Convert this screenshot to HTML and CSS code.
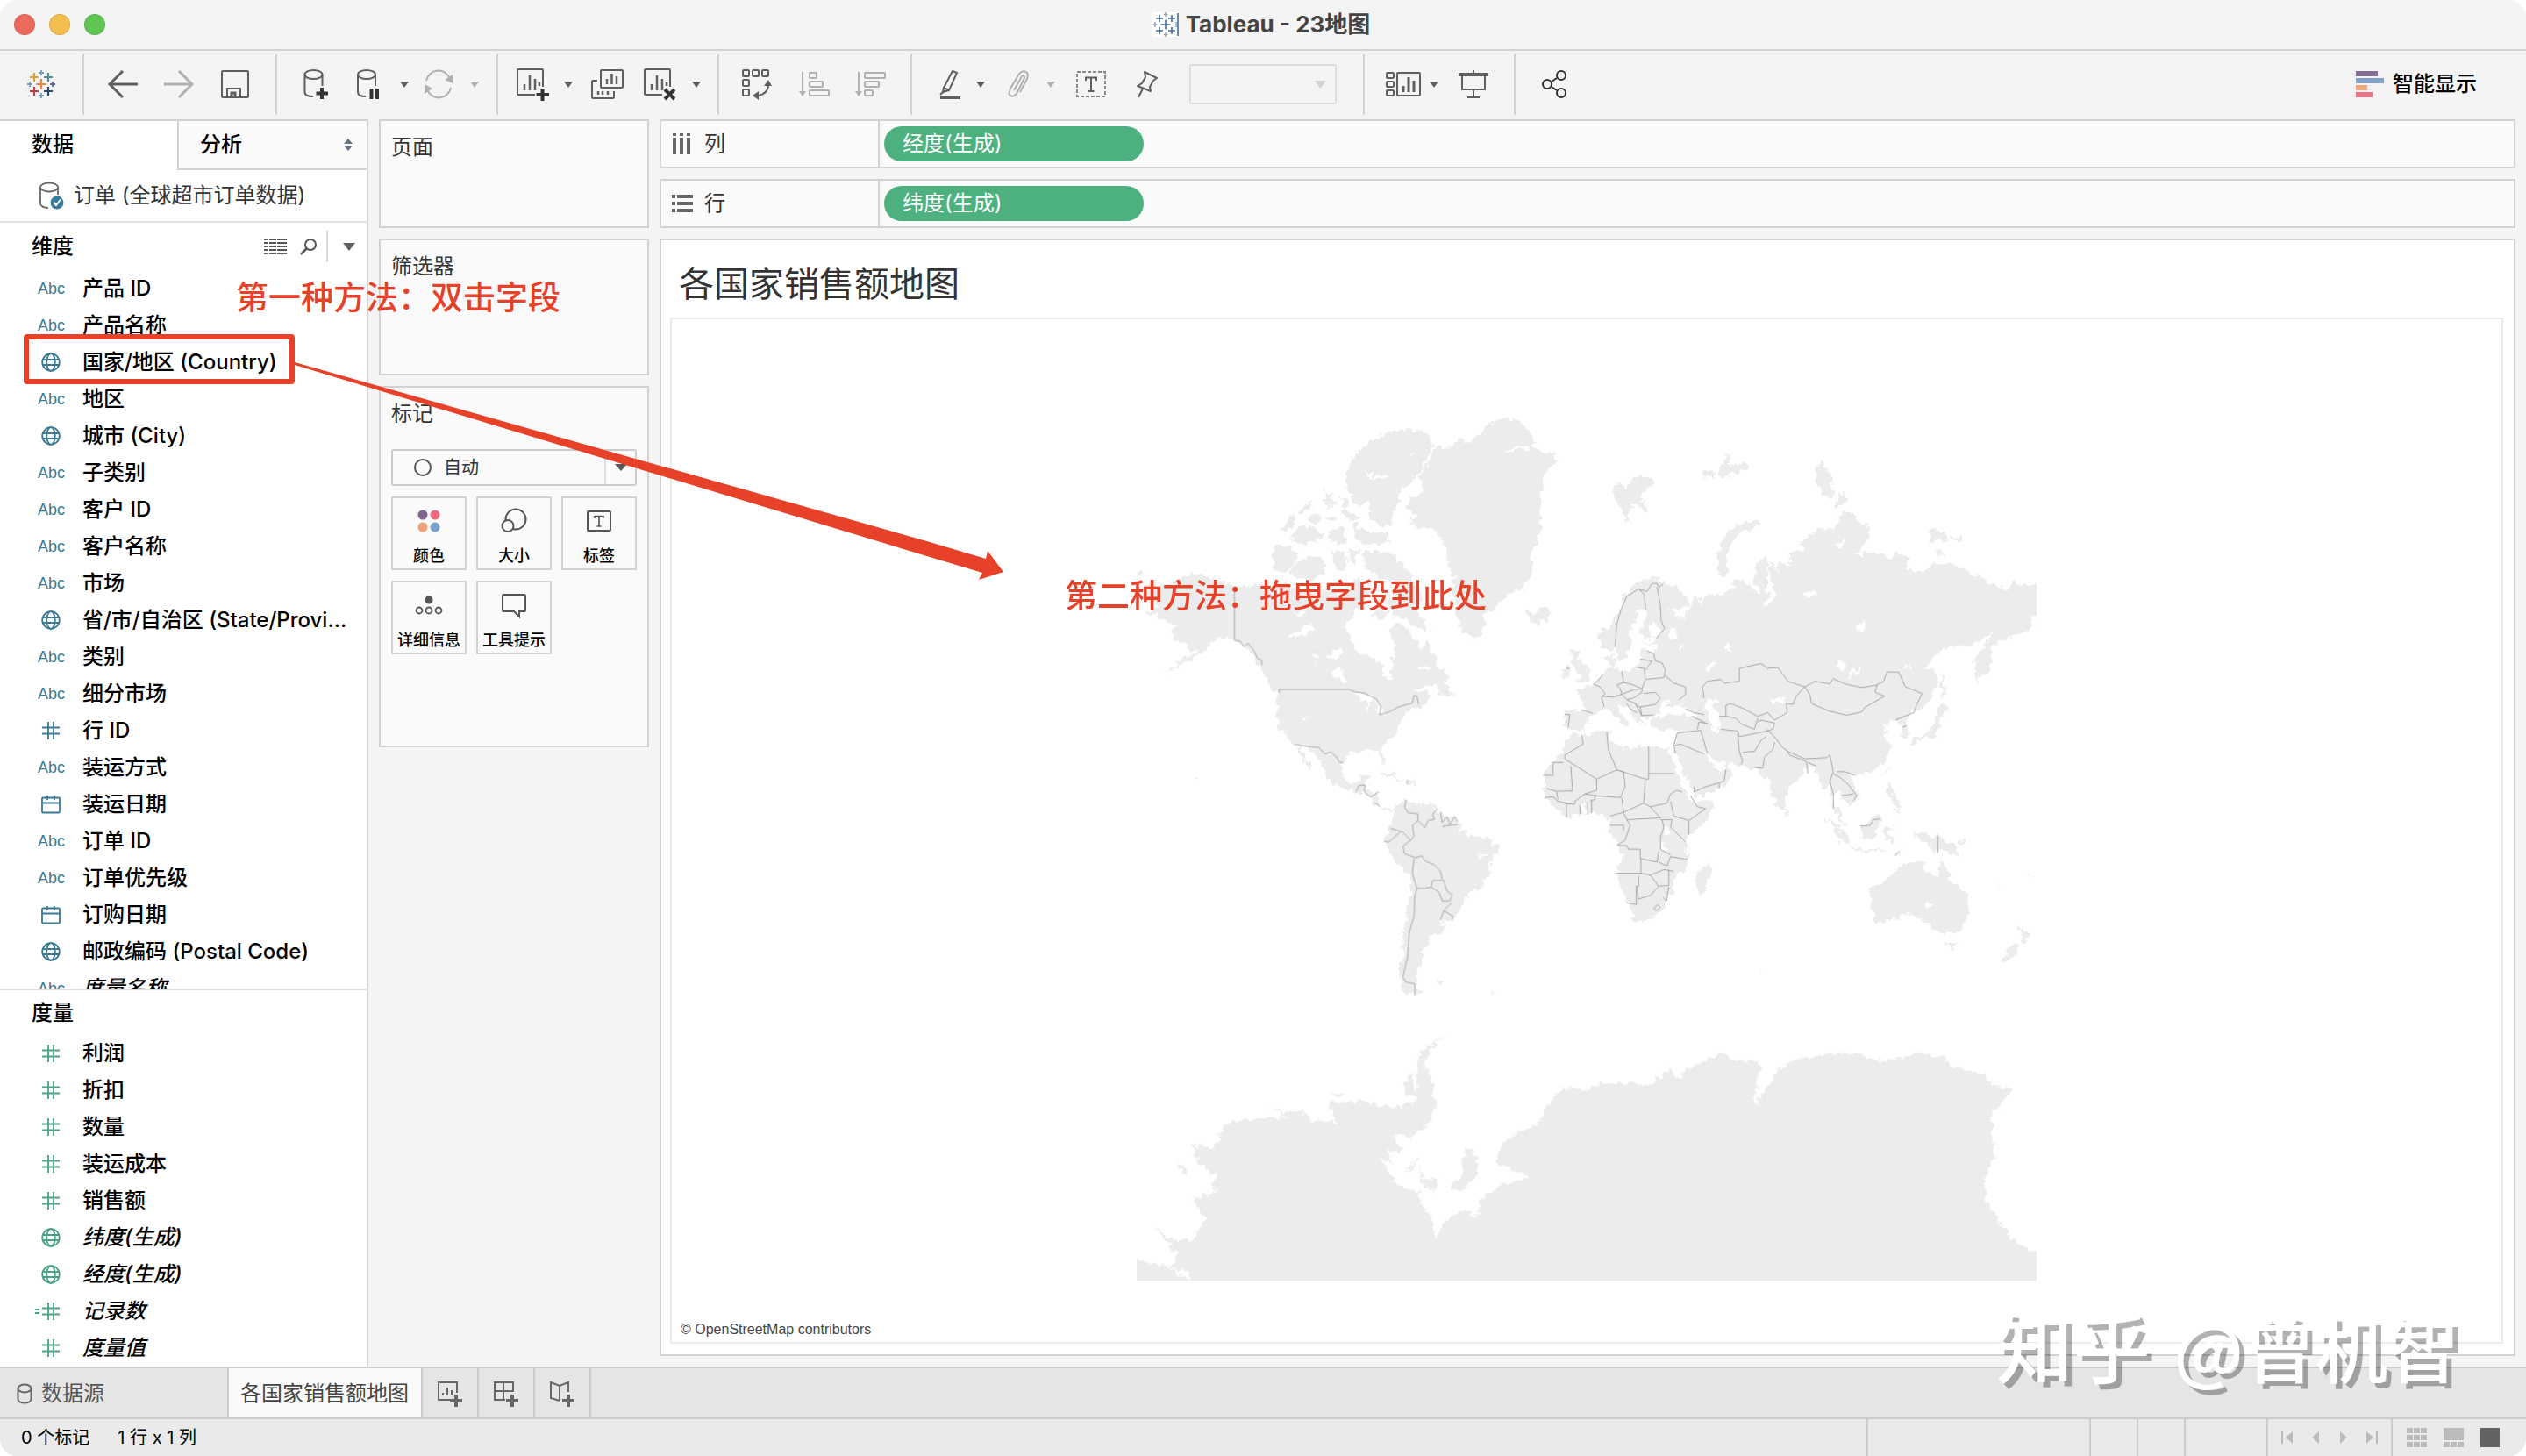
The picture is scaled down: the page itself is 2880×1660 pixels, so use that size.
FILE: index.html
```html
<!DOCTYPE html>
<html lang="zh-CN">
<head>
<meta charset="utf-8">
<title>Tableau - 23地图</title>
<link rel="stylesheet" href="styles.css">
</head>
<body>
<svg width="0" height="0" class="defs" aria-hidden="true">
  <symbol id="caret" viewBox="0 0 10 7"><path d="M0 0H10L5 7Z" fill="currentColor"/></symbol>
  <symbol id="globe" viewBox="0 0 22 22"><g fill="none" stroke="currentColor" stroke-width="1.8"><circle cx="11" cy="11" r="9.8"/><ellipse cx="11" cy="11" rx="4.8" ry="9.8"/><path d="M1.5 8H20.5M1.5 14H20.5"/></g></symbol>
  <symbol id="hash" viewBox="0 0 22 22"><path d="M8 1V21M14 1V21M1 7.5H21M1 14.5H21" stroke="currentColor" stroke-width="1.8"/></symbol>
  <symbol id="calendar" viewBox="0 0 22 22"><g fill="none" stroke="currentColor" stroke-width="1.8"><rect x="1" y="3.5" width="20" height="17" rx="1"/><path d="M1 9.5H21M7 1V6M15 1V6"/></g></symbol>
  <symbol id="bars" viewBox="0 0 38 38"><g fill="none" stroke="currentColor" stroke-width="2"><path d="M22 31H3Q2 31 2 30V3Q2 2 3 2H30Q31 2 31 3V22"/><path d="M10 26V19M16 26V9M22 26V13M27 21V17" stroke-width="2.5"/></g></symbol>
</svg>
<div class="app">
  <header class="titlebar">
    <div class="lights"><button class="light light-close" aria-label="关闭"></button><button class="light light-min" aria-label="最小化"></button><button class="light light-max" aria-label="最大化"></button></div>
    <h1 class="window-title"><svg width="30" height="28" viewBox="0 0 30 28"><path fill="#fff" d="M0 0H30V28H0Z"/><g stroke="#3f6f9c" stroke-width="1.6"><path d="M15 8.500V19.500M9.500 14H20.500M8 3V11M4 7H12M22 3V11M18 7H26M8 17V25M4 21H12M22 17V25M18 21H26M29 1V27"/><path stroke="#9ab" d="M15 0V5M12.500 2.500H17.500M15 23V28M12.500 25.500H17.500M3 11V17M.5 14H5.500M27 11V17"/></g></svg>Tableau - 23地图</h1>
  </header>

  <nav class="toolbar" aria-label="工具栏">
    <div class="group g-home"><button class="tool" aria-label="主页"><svg width="34" height="34" viewBox="-17 -17 34 34" stroke-width="2.2"><path stroke="#e8894a" d="M0-6V6M-6 0H6"/><path stroke="#d9a23c" d="M-8-13V-3M-13-8H-3"/><path stroke="#4e8f98" d="M8-13V-3M3-8H13"/><path stroke="#c43d45" d="M-8 3V13M-13 8H-3"/><path stroke="#2b4a73" d="M8 3V13M3 8H13"/><path stroke="#7a9db3" stroke-width="1.8" d="M0-16V-10M-3-13H3M0 10V16M-3 13H3M-13-3V3M-16 0H-10"/><path stroke="#5b6591" stroke-width="1.8" d="M13-3V3M10 0H16"/></svg></button></div>
    <div class="group g-nav">
      <button class="tool" aria-label="撤消"><svg width="36" height="34" viewBox="0 0 36 34"><path d="M35 17H3M18 2L3 17L18 32" fill="none" stroke="#5f5f5f" stroke-width="3"/></svg></button>
      <button class="tool" aria-label="重做"><svg width="36" height="34" viewBox="0 0 36 34"><path d="M1 17H33M18 2L33 17L18 32" fill="none" stroke="#b0b0b0" stroke-width="3"/></svg></button>
      <button class="tool" aria-label="保存"><svg width="34" height="34" viewBox="0 0 34 34" fill="none" stroke="#5f5f5f" stroke-width="2"><rect x="2" y="2" width="30" height="30" rx="1"/><path d="M8 32V22H23V32"/><path d="M13 31V27H17V31" stroke-width="3"/></svg></button>
    </div>
    <div class="group g-data">
      <button class="tool" aria-label="新建数据源"><svg width="30" height="36" viewBox="0 0 30 36"><g fill="none" stroke="#5f5f5f" stroke-width="2"><ellipse cx="11.500" cy="7" rx="10" ry="5"/><path d="M1.500 7V27C1.500 30 5 32 11 32M21.500 7V20"/></g><path d="M21 22V35M14.500 28.500H28" stroke="#333" stroke-width="4"/></svg></button>
      <button class="tool" aria-label="暂停自动更新"><svg width="30" height="36" viewBox="0 0 30 36"><g fill="none" stroke="#5f5f5f" stroke-width="2"><ellipse cx="13" cy="7" rx="10" ry="5"/><path d="M3 7V27C3 30 6 32 12 32M23 7V20"/></g><path d="M18.500 23V35M25 23V35" stroke="#333" stroke-width="4"/></svg></button>
      <button class="tool dark" aria-label="更新选项"><svg width="10" height="7"><use href="#caret"/></svg></button>
      <button class="tool" aria-label="刷新"><svg width="36" height="34" viewBox="0 0 36 34"><path d="M4 13A14 14 0 0 1 31 11M32 21A14 14 0 0 1 5 23" fill="none" stroke="#b0b0b0" stroke-width="2"/><path d="M25 12L34 6V16ZM11 22L2 17V28Z" fill="#b0b0b0"/></svg></button>
      <button class="tool pale" aria-label="刷新选项"><svg width="10" height="7"><use href="#caret"/></svg></button>
    </div>
    <div class="group g-sheet">
      <button class="tool ink" aria-label="新建工作表"><svg width="38" height="38" viewBox="0 0 38 38"><use href="#bars"/><path d="M30.500 24V38M23.500 31H38" stroke="#333" stroke-width="4"/></svg></button>
      <button class="tool dark" aria-label="新建选项"><svg width="10" height="7"><use href="#caret"/></svg></button>
      <button class="tool" aria-label="复制工作表"><svg width="38" height="36" viewBox="0 0 38 36" fill="none" stroke="#5f5f5f" stroke-width="2"><rect x="12" y="2" width="25" height="20" rx="1"/><path d="M19 18V12M24.500 18V6M30 18V9" stroke-width="2.5"/><path d="M8 14H3Q2 14 2 15V33Q2 34 3 34H26Q27 34 27 33V26"/><path d="M9 30V26M14 30V26M20 30V26" stroke-width="2.500"/></svg></button>
      <button class="tool ink" aria-label="清除工作表"><svg width="38" height="38" viewBox="0 0 38 38"><use href="#bars"/><path d="M25 25L36 36M36 25L25 36" stroke="#333" stroke-width="4"/></svg></button>
      <button class="tool dark" aria-label="清除选项"><svg width="10" height="7"><use href="#caret"/></svg></button>
    </div>
    <div class="group g-sort">
      <button class="tool" aria-label="交换行和列"><svg width="36" height="36" viewBox="0 0 36 36"><g fill="none" stroke="#5f5f5f" stroke-width="2"><rect x="2" y="2" width="7" height="7" rx="1"/><rect x="13" y="2" width="7" height="7" rx="1"/><rect x="24" y="2" width="7" height="7" rx="1"/><rect x="2" y="13" width="7" height="7" rx="1"/><rect x="2" y="24" width="7" height="7" rx="1"/><path d="M31 18Q31 29 19 31"/></g><path d="M26 20L31 13L35 20ZM20 26L13 31L20 36Z" fill="#5f5f5f"/></svg></button>
      <button class="tool" aria-label="升序排序"><svg width="36" height="32" viewBox="0 0 36 32"><g fill="none" stroke="#b0b0b0" stroke-width="2"><path d="M5 2V26"/><rect x="13" y="3" width="8" height="6" rx="1"/><rect x="13" y="13" width="15" height="6" rx="1"/><rect x="13" y="23" width="22" height="6" rx="1"/></g><path d="M1 24H9L5 30Z" fill="#b0b0b0"/></svg></button>
      <button class="tool" aria-label="降序排序"><svg width="36" height="32" viewBox="0 0 36 32"><g fill="none" stroke="#b0b0b0" stroke-width="2"><path d="M5 2V26"/><rect x="12" y="3" width="23" height="6" rx="1"/><rect x="12" y="13" width="16" height="6" rx="1"/><rect x="12" y="23" width="9" height="6" rx="1"/></g><path d="M1 24H9L5 30Z" fill="#b0b0b0"/></svg></button>
    </div>
    <div class="group g-mark">
      <button class="tool" aria-label="突出显示"><svg width="26" height="36" viewBox="0 0 26 36"><g fill="none" stroke="#5f5f5f" stroke-width="2"><path d="M15 3L20 5L11 25L5 22ZM5 22L4 27L11 25"/><path d="M1 30L5 26"/></g><path d="M1 33.500H24" stroke="#5f5f5f" stroke-width="3"/></svg></button>
      <button class="tool dark" aria-label="突出显示选项"><svg width="10" height="7"><use href="#caret"/></svg></button>
      <button class="tool" aria-label="分组"><svg width="26" height="34" viewBox="0 0 26 34"><path d="M8 24L17 8Q20 5 20 10L11 28Q6 33 3 29Q2 27 4 22L14 5Q19 0 23 4Q25 7 22 13L15 26" fill="none" stroke="#b0b0b0" stroke-width="2"/></svg></button>
      <button class="tool pale" aria-label="分组选项"><svg width="10" height="7"><use href="#caret"/></svg></button>
      <button class="tool" aria-label="显示标记标签"><svg width="34" height="30" viewBox="0 0 34 30"><rect x="1" y="1" width="32" height="28" fill="none" stroke="#8a8a8a" stroke-width="2" stroke-dasharray="4 2"/><path d="M11 11V7.500H23V11M17 8V23M13.500 23H20.500" fill="none" stroke="#5f5f5f" stroke-width="2"/></svg></button>
      <button class="tool" aria-label="固定轴"><svg width="28" height="32" viewBox="0 0 28 32"><path d="M12 2L26 9L22 12L18 19L19 24L4 18L9 15L13 8ZM10 21L5 31" fill="none" stroke="#5f5f5f" stroke-width="2" stroke-linejoin="round"/></svg></button>
      <span class="fit"><select class="fit-select" aria-label="适合" disabled><option></option></select><svg class="fit-caret" width="13" height="9" viewBox="0 0 10 7"><use href="#caret"/></svg></span>
    </div>
    <div class="group g-show">
      <button class="tool" aria-label="显示/隐藏卡"><svg width="40" height="30" viewBox="0 0 40 30" fill="none" stroke="#5f5f5f" stroke-width="2"><rect x="1" y="2" width="8" height="6" rx="1"/><rect x="1" y="12" width="8" height="6" rx="1"/><rect x="1" y="22" width="8" height="6" rx="1"/><rect x="13" y="2" width="26" height="26" rx="1"/><path d="M20 24V17M26 24V7M32 24V11" stroke-width="3"/></svg></button>
      <button class="tool dark" aria-label="卡选项"><svg width="10" height="7"><use href="#caret"/></svg></button>
      <button class="tool" aria-label="演示模式"><svg width="34" height="34" viewBox="0 0 34 34" fill="none" stroke="#5f5f5f" stroke-width="2"><path d="M0 6H34" stroke-width="4"/><path d="M17 1V5M4 7V23H30V7M17 23V32M10 32H24"/></svg></button>
    </div>
    <div class="group g-share"><button class="tool" aria-label="共享"><svg width="30" height="34" viewBox="0 0 30 34" fill="none" stroke="#333" stroke-width="2"><circle cx="7" cy="17" r="5"/><circle cx="23" cy="7" r="5"/><circle cx="23" cy="27" r="5"/><path d="M12 14L18 10M12 20L18 24"/></svg></button></div>
    <button class="showme"><svg width="32" height="30" viewBox="0 0 32 30"><path fill="#866d93" d="M0 0H25V6H0Z"/><path fill="#83a1c8" d="M0 8H32V14H0Z"/><path fill="#efa67c" d="M0 16H13V22H0Z"/><path fill="#ea7186" d="M0 24H19V30H0Z"/></svg>智能显示</button>
  </nav>

  <main class="workspace">
    <aside class="side">
      <div class="side-tabs"><button class="side-tab active">数据</button><button class="side-tab">分析<svg width="10" height="14" viewBox="0 0 10 14"><path d="M0 6L5 0L10 6ZM0 8H10L5 14Z" fill="#667080"/></svg></button></div>
      <div class="source"><svg width="28" height="32" viewBox="0 0 28 32"><g fill="none" stroke="#666" stroke-width="1.800"><ellipse cx="11" cy="6.500" rx="10" ry="5"/><path d="M1 6V25C1 28 5 30 10 30M21 6V15"/></g><circle cx="20" cy="24" r="7.500" fill="#3a7c9c"/><path d="M16.500 24L19 27L24 20.500" fill="none" stroke="#fff" stroke-width="2"/></svg>订单 (全球超市订单数据)</div>
      <section class="dims">
        <div class="side-head"><h2>维度</h2>
          <button class="tool" aria-label="查看数据"><svg width="26" height="18" viewBox="0 0 26 18"><path d="M0 1H26M0 5H26M0 9H26M0 13H26M0 17H26" stroke="#555" stroke-width="1.800" stroke-dasharray="4 2 8 1 5 1 5 1"/></svg></button>
          <button class="tool find" aria-label="查找字段"><svg width="20" height="20" viewBox="0 0 20 20"><circle cx="12" cy="8" r="6" fill="none" stroke="#555" stroke-width="2"/><path d="M8 12L1 19" stroke="#555" stroke-width="2.500"/></svg></button>
          <button class="tool dark menu" aria-label="字段菜单"><svg width="14" height="9" viewBox="0 0 10 7" preserveAspectRatio="none"><use href="#caret"/></svg></button>
        </div>
        <ul class="fields">
          <li><span class="abc">Abc</span>产品 ID</li>
          <li><span class="abc">Abc</span>产品名称</li>
          <li><svg><use href="#globe"/></svg>国家/地区 (Country)</li>
          <li><span class="abc">Abc</span>地区</li>
          <li><svg><use href="#globe"/></svg>城市 (City)</li>
          <li><span class="abc">Abc</span>子类别</li>
          <li><span class="abc">Abc</span>客户 ID</li>
          <li><span class="abc">Abc</span>客户名称</li>
          <li><span class="abc">Abc</span>市场</li>
          <li><svg><use href="#globe"/></svg>省/市/自治区 (State/Provi...</li>
          <li><span class="abc">Abc</span>类别</li>
          <li><span class="abc">Abc</span>细分市场</li>
          <li><svg><use href="#hash"/></svg>行 ID</li>
          <li><span class="abc">Abc</span>装运方式</li>
          <li><svg><use href="#calendar"/></svg>装运日期</li>
          <li><span class="abc">Abc</span>订单 ID</li>
          <li><span class="abc">Abc</span>订单优先级</li>
          <li><svg><use href="#calendar"/></svg>订购日期</li>
          <li><svg><use href="#globe"/></svg>邮政编码 (Postal Code)</li>
          <li class="gen"><span class="abc">Abc</span>度量名称</li>
        </ul>
      </section>
      <section class="measures">
        <div class="side-head"><h2>度量</h2></div>
        <ul class="fields green">
          <li><svg><use href="#hash"/></svg>利润</li>
          <li><svg><use href="#hash"/></svg>折扣</li>
          <li><svg><use href="#hash"/></svg>数量</li>
          <li><svg><use href="#hash"/></svg>装运成本</li>
          <li><svg><use href="#hash"/></svg>销售额</li>
          <li class="gen"><svg><use href="#globe"/></svg>纬度(生成)</li>
          <li class="gen"><svg><use href="#globe"/></svg>经度(生成)</li>
          <li class="gen"><svg viewBox="0 0 22 22"><use href="#hash" width="22" height="22"/><path d="M-7 9H-2M-7 13H-2" stroke="currentColor" stroke-width="1.800"/></svg>记录数</li>
          <li class="gen"><svg><use href="#hash"/></svg>度量值</li>
        </ul>
      </section>
    </aside>

    <div class="cards">
      <section class="card pages"><h2>页面</h2></section>
      <section class="card filters"><h2>筛选器</h2></section>
      <section class="card marks"><h2>标记</h2>
        <div class="mark-type"><svg class="mark-dot" width="22" height="22" viewBox="0 0 22 22"><circle cx="11" cy="11" r="9" fill="none" stroke="#555" stroke-width="2"/></svg><select class="mark-select" aria-label="标记类型"><option>自动</option></select><span class="mark-arrow"><svg width="14" height="8" viewBox="0 0 10 7" preserveAspectRatio="none"><use href="#caret"/></svg></span></div>
        <div class="mark-grid">
          <button class="mark"><svg viewBox="0 0 32 32"><circle cx="9" cy="9" r="5.500" fill="#7f6592"/><circle cx="23" cy="9" r="5.500" fill="#ea6b80"/><circle cx="9" cy="23" r="5.500" fill="#efa276"/><circle cx="23" cy="23" r="5.500" fill="#7ba0c9"/></svg>颜色</button>
          <button class="mark"><svg viewBox="0 0 32 32" fill="none" stroke="#555" stroke-width="2"><circle cx="18" cy="14" r="11.500"/><circle cx="9" cy="21.500" r="6.500" fill="#fafafa"/></svg>大小</button>
          <button class="mark"><svg viewBox="0 0 32 32" fill="none" stroke="#555" stroke-width="2"><rect x="3" y="5" width="26" height="22" rx="1"/><path d="M11 13V10.500H21V13M16 11V22M13.500 22H18.500" stroke-width="1.600"/></svg>标签</button>
          <button class="mark"><svg viewBox="0 0 32 32" fill="none" stroke="#555" stroke-width="1.800"><circle cx="16" cy="10" r="4.500" fill="#555" stroke="none"/><circle cx="5" cy="22" r="3.500"/><circle cx="16" cy="22" r="3.500"/><circle cx="27" cy="22" r="3.500"/></svg>详细信息</button>
          <button class="mark"><svg viewBox="0 0 32 32" fill="none" stroke="#555" stroke-width="2"><path d="M4 4H28Q29 4 29 5V22Q29 23 28 23H22V29L16 23H4Q3 23 3 22V5Q3 4 4 4Z"/></svg>工具提示</button>
        </div>
      </section>
    </div>

    <div class="canvas">
      <div class="shelf"><div class="shelf-name"><svg width="24" height="26" viewBox="0 0 24 26"><path d="M3 1V4M11 1V4M19 1V4M3 6V25M11 6V25M19 6V25" stroke="#666" stroke-width="4"/></svg>列</div><button class="pill">经度(生成)</button></div>
      <div class="shelf"><div class="shelf-name"><svg width="24" height="22" viewBox="0 0 24 22"><path d="M0 3H4M6 3H24M0 11H4M6 11H24M0 19H4M6 19H24" stroke="#666" stroke-width="4"/></svg>行</div><button class="pill">纬度(生成)</button></div>
      <section class="view">
        <h2 class="view-title">各国家销售额地图</h2>
        <div class="map">
          <svg class="world" viewBox="1284 412 1050 1070" role="img" aria-label="世界地图">
            <defs>
              <clipPath id="extent"><path d="M1296 412H2322V1460H1296Z"/></clipPath>
              <filter id="coast" filterUnits="userSpaceOnUse" x="1284" y="412" width="1050" height="1090" color-interpolation-filters="sRGB"><feTurbulence type="fractalNoise" baseFrequency="0.13" numOctaves="3" seed="7"/><feDisplacementMap in="SourceGraphic" scale="12" xChannelSelector="R" yChannelSelector="G"/></filter>
            </defs>
            <g clip-path="url(#extent)">
            <g filter="url(#coast)" fill="#ececec">
              <g transform="translate(1280 460) scale(.35714 .44643)">
                <path d="M235 432L270 445 320 455 357 465 400 468 440 455 480 470 520 455 560 475 610 482 660 475 700 492 722 470 750 440 765 470 790 480 760 510 740 530 720 555 700 572 725 585 735 620 760 640 800 655 830 665 830 690 845 704 858 700 855 650 868 640 860 600 850 578 870 558 900 565 920 590 940 602 955 630 972 605 990 640 1010 670 1035 690 1035 702 1010 715 970 722 925 737 960 738 985 748 975 762 940 778 910 788 890 805 875 840 860 850 825 878 832 900 842 922 830 918 818 890 795 885 760 892 730 890 705 915 700 950 720 970 745 968 755 950 790 950 780 970 772 988 818 992 812 1018 830 1032 862 1035 860 1045 835 1040 800 1020 780 1000 740 992 690 975 650 955 640 930 620 900 590 878 562 872 580 900 608 935 600 938 575 910 550 872 525 855 500 830 490 800 493 760 495 738 470 718 455 700 440 672 420 650 395 622 375 612 357 605 310 598 280 615 260 632 220 652 180 672 135 690 190 655 240 632 200 618 165 605 160 580 175 565 130 555 110 540 60 535 115 520 90 505 50 490 75 480 55 468 90 462 150 462Z"/>
                <path d="M485 362L520 362 560 380 555 400 520 430 478 422ZM560 400L620 390 645 400 650 430 610 450 570 445 530 430ZM670 380L710 375 715 420 690 430 672 405ZM725 375L760 372 740 410 720 400ZM768 385L790 375 870 385 875 400 920 430 940 470 960 500 930 520 960 550 975 580 930 570 900 550 860 545 850 500 880 500 870 455 820 445 800 430 770 420ZM810 520L850 530 835 550 800 545ZM1000 700L1030 712 1058 752 1040 745 1010 745ZM500 325L540 285 555 300 530 325ZM530 340L570 310 620 320 640 345 600 355 560 360ZM565 275L605 248 605 265 570 285ZM640 225L670 235 680 260 650 265ZM700 270L760 290 740 300 700 290ZM735 305L790 330 848 328 845 355 780 362 745 350ZM600 280L630 290 625 310 590 300ZM660 325L710 315 715 340 690 365 660 345ZM695 240L722 250 718 268 700 262ZM650 290L690 290 680 305 655 305Z"/>
                <path d="M740 130L790 100 850 70 920 65 970 75 995 105 975 135 950 165 930 200 880 220 885 250 860 280 858 310 830 318 785 300 790 250 755 260 720 225 710 180 730 150Z"/>
                <path d="M1165 55L1220 36 1270 45 1310 80 1305 105 1345 125 1388 130 1380 155 1350 180 1330 240 1335 310 1320 360 1300 390 1310 420 1300 450 1270 475 1225 490 1180 530 1155 530 1155 565 1135 605 1090 590 1065 540 1060 500 1050 470 1060 440 1040 420 1035 370 1000 325 950 320 905 300 945 290 900 260 915 245 960 220 945 185 970 155 1000 115 1055 108 1080 90 1110 100Z"/>
                <path d="M1285 525L1310 535 1350 515 1370 535 1355 552 1320 562 1298 553ZM810 942L850 945 900 962 870 960 820 946ZM898 962L930 964 935 970 905 972ZM45 430L62 428 66 436 48 438ZM235 955L245 962 240 966ZM998 1472L1018 1474 1005 1480ZM1175 1502L1195 1506 1180 1508Z"/>
                <path d="M870 1025L905 1012 925 1022 985 1020 1000 1040 1040 1055 1070 1065 1085 1080 1075 1090 1120 1105 1165 1110 1200 1130 1200 1140 1172 1175 1170 1210 1140 1240 1100 1255 1090 1275 1055 1320 1015 1318 1028 1340 1015 1355 975 1358 980 1372 950 1400 958 1410 945 1440 940 1465 935 1480 958 1508 920 1512 888 1495 880 1450 900 1400 890 1370 905 1310 918 1250 920 1205 875 1180 835 1120 838 1100 862 1065 862 1040Z"/>
              </g>
              <g transform="translate(1740 480) scale(.38265 .42092)">
                <path d="M115 785L165 782 200 795 165 770 175 760 160 745 145 735 150 725 175 722 190 715 205 705 220 690 240 675 250 665 240 640 262 628 265 650 262 665 285 675 310 672 335 668 340 650 340 635 355 620 385 625 385 605 345 602 410 592 385 590 350 592 335 570 350 545 365 520 355 512 335 515 325 545 310 565 315 590 305 620 290 650 275 655 265 615 250 625 225 615 215 575 245 555 275 520 285 480 310 450 350 430 385 425 410 440 450 450 480 480 485 500 450 510 420 500 440 515 450 535 480 535 470 515 495 500 500 475 520 480 520 500 540 470 560 475 600 460 630 455 615 430 650 435 685 465 700 465 675 430 690 380 715 370 722 400 718 460 730 470 705 500 728 495 750 465 735 455 730 430 725 380 740 380 745 410 760 380 790 395 778 360 825 350 820 325 850 305 900 290 925 285 935 250 965 245 990 275 1022 285 1020 320 980 365 1030 355 1090 370 1100 355 1140 370 1140 400 1160 410 1200 400 1215 380 1260 385 1300 400 1330 415 1370 425 1370 440 1440 455 1450 435 1545 450 1545 525 1505 530 1515 560 1480 568 1460 580 1400 602 1385 615 1392 640 1380 670 1355 695 1345 710 1335 680 1340 640 1370 605 1395 575 1380 580 1355 590 1330 610 1280 605 1235 620 1200 660 1185 670 1220 675 1225 710 1200 760 1180 780 1145 790 1130 810 1140 855 1120 860 1120 825 1105 810 1080 820 1060 820 1075 840 1065 850 1085 885 1070 920 1040 945 1000 955 980 960 965 970 990 1010 985 1030 965 1040 945 1030 930 1005 915 1010 910 1030 940 1065 950 1100 930 1080 915 1050 905 985 885 1000 870 960 860 935 840 935 825 960 780 1000 770 1050 755 1055 735 1020 720 965 700 960 685 945 640 930 610 930 602 940 622 950 590 990 500 1020 498 995 470 950 445 905 440 880 450 840 430 840 390 838 370 820 375 805 400 800 440 795 490 800 520 800 500 790 460 770 440 775 420 770 430 755 410 760 400 785 385 800 340 805 350 830 335 815 320 800 300 775 270 760 285 795 310 815 290 830 280 815 245 780 225 785 200 795 180 820 170 835 135 840 115 830Z"/>
                <path d="M135 850L165 850 240 842 255 845 250 865 300 885 325 890 330 870 360 880 430 888 435 920 458 970 470 1000 495 1028 555 1027 555 1050 530 1090 485 1120 475 1150 480 1190 480 1210 440 1240 440 1280 420 1290 400 1335 370 1350 325 1358 310 1330 290 1270 270 1225 285 1180 275 1150 245 1110 250 1075 240 1075 200 1062 165 1065 120 1075 90 1050 55 1020 55 960 80 920 110 895 110 870ZM510 1220L530 1210 545 1192 553 1215 530 1280 512 1285 502 1262Z"/>
                <path d="M135 620L160 620 158 640 175 660 190 685 185 705 150 712 145 700 160 690 150 670 135 650ZM108 675L132 668 130 690 110 700 105 690ZM260 175L285 170 300 185 310 160 345 148 380 160 375 180 345 192 358 250 335 235 318 220 303 278 285 240 262 210ZM520 135L555 130 560 155 530 155ZM570 145L590 100 610 95 605 120 660 115 662 130 610 140 600 155ZM690 268L690 285 640 300 615 330 595 380 600 420 570 410 565 385 580 340 605 295 650 275ZM875 115L890 112 908 150 920 200 895 205 870 180 862 150ZM920 235L930 190 962 215ZM1200 300L1215 290 1258 305 1250 325 1205 325ZM1265 312L1298 320 1290 328 1268 322ZM1220 345L1245 358 1225 365Z"/>
                <path d="M1235 680L1242 690 1250 745 1238 755ZM1235 765L1260 780 1235 800 1235 830 1215 855 1185 858 1150 880 1150 862 1195 850 1215 810 1225 795ZM1078 935L1082 945 1075 958ZM1072 985L1085 980 1090 1010 1110 1020 1115 1065 1092 1055 1105 1045 1085 1020 1070 1005ZM770 1040L788 1060 778 1070ZM890 1070L920 1090 960 1125 965 1150 945 1145 915 1105ZM965 1155L1010 1160 1080 1162 1020 1168 970 1162ZM995 1095L1030 1080 1048 1060 1055 1080 1040 1130 1005 1130ZM1065 1105L1100 1102 1080 1112 1090 1140 1070 1135ZM1095 1168L1120 1160 1100 1175ZM1150 1112L1175 1120 1230 1125 1270 1150 1298 1178 1260 1170 1235 1160 1215 1165 1195 1140 1165 1130ZM1285 1145L1310 1132 1305 1145Z"/>
                <path d="M1025 1265L1080 1245 1110 1210 1155 1190 1190 1195 1185 1220 1225 1235 1238 1185 1255 1215 1265 1245 1315 1290 1322 1320 1290 1385 1240 1390 1205 1370 1195 1350 1180 1355 1140 1335 1085 1350 1045 1360 1035 1350ZM1255 1410L1282 1412 1270 1436ZM1465 1360L1480 1380 1504 1388 1480 1417 1474 1390ZM1472 1410L1460 1440 1432 1468 1416 1462 1436 1436ZM1400 1248L1418 1262 1410 1258ZM1498 1230L1512 1222 1502 1232ZM690 1490L702 1492 692 1496Z"/>
              </g>
              <g transform="translate(1280 1140) scale(.67602 .33333)">
                <path d="M122 990L110 935 75 905 90 900 88 860 50 770 75 810 100 820 120 820 138 750 120 680 158 655 150 630 158 605 125 545 115 490 150 510 165 480 165 440 190 415 220 405 300 400 320 415 360 418 345 350 400 345 440 365 470 365 495 345 497 250 500 180 545 122 515 180 508 235 522 260 528 360 520 420 485 470 455 465 475 520 445 515 455 560 430 540 460 620 480 650 500 660 510 720 520 740 528 815 545 750 580 715 595 750 605 680 640 630 685 605 650 570 630 555 635 510 665 450 700 430 705 390 735 320 740 300 760 300 780 305 820 280 895 290 920 235 940 270 950 235 990 205 1010 175 1030 205 1075 215 1070 300 1062 350 1070 355 1085 300 1110 230 1150 195 1215 180 1250 190 1265 205 1320 200 1340 180 1385 195 1400 230 1450 250 1465 285 1500 310 1465 400 1470 540 1455 600 1455 680 1475 750 1500 820 1550 880 1550 1000ZM10 870L30 892 80 915 118 965 118 1000 10 1000ZM595 520L600 600 580 640 550 655 570 600 572 540 582 512ZM500 535L485 590 482 570ZM500 570L510 620 530 600 528 655 505 635ZM488 245L494 330 475 330 480 270ZM92 550L110 580 108 600 95 580ZM248 360L270 385 300 378 318 410 270 395ZM352 320L378 322 365 335Z"/>
              </g>
              <g fill="#fff">
                <path transform="translate(1280 460) scale(.35714 .44643)" d="M535 588L560 580 580 570 610 562 600 575 580 590 545 598ZM590 625L640 610 620 618 600 620ZM652 645L690 625 700 635 685 655ZM608 640L620 645 618 662ZM672 685L700 675 705 700 718 715 700 712 690 710ZM740 740L775 738 800 755 785 765 780 795 775 765 750 750ZM805 755L825 775 840 795 815 785ZM575 795L590 800 585 808ZM948 670L985 675 970 685 945 680ZM765 165L790 182 855 180 850 188 800 195 775 185ZM895 135L930 120 925 128ZM1220 125L1260 110 1310 115 1250 122ZM1130 1160L1160 1142 1150 1156ZM545 530L590 535 560 545Z"/>
                <path transform="translate(1740 480) scale(.38265 .42092)" d="M538 760L568 750 568 765 555 775 575 800 578 832 560 840 548 820 545 800 530 780ZM725 755L770 745 765 760 730 768ZM530 885L545 905 575 925 598 925 594 942 570 944 548 922ZM950 700L975 680 998 650 995 670 965 698ZM930 645L945 650 945 678 935 672ZM985 550L1015 545 1010 568 990 572ZM828 465L868 462 865 470 830 478ZM365 560L385 545 400 580 370 590ZM435 560L450 570 445 588 432 580ZM455 610L468 612 464 625ZM538 655L565 652 550 665 548 682 538 680ZM595 600L602 605 603 628 596 620ZM410 1105L432 1102 435 1118 412 1120ZM398 1130L402 1160 425 1170 412 1150ZM1195 1300L1206 1308 1198 1315ZM918 330L965 325 940 345 925 342ZM1125 665L1145 662 1130 675ZM160 1045L175 1035 178 1062 165 1062Z"/>
              </g>
            </g>
            <g class="borders">
              <path transform="translate(1280 460) scale(.35714 .44643)" d="M357 470V605L375 607 388 622 400 612 420 632 430 650 444 655V670M499 740V730H722L740 736 775 740 810 755 825 775 820 795 850 788 880 775 925 765 930 745 940 748 945 768M548 870L590 876 625 878 645 895 665 890 685 905 690 915 705 918M745 992L755 975H775L770 990 790 1005 818 992M805 1020L822 1030M908 962V972M905 1012L900 1030 910 1045 943 1048V1065L965 1083 975 1065 995 1062 990 1050 1003 1035M1015 1045L1020 1070 1035 1055 1045 1075 1060 1055 1070 1068M1020 1080L1070 1075M943 1065L925 1078 930 1105 920 1115 895 1095 855 1085M920 1115L895 1130 900 1150 935 1160 955 1155 965 1168 995 1178 1015 1195 1020 1215M835 1118L850 1120 885 1095M930 1162L925 1200 930 1215 940 1238 965 1238 985 1235 1010 1248 1020 1270 1045 1270 1053 1255 1035 1245 1025 1218 990 1218 985 1235M940 1238L932 1260 930 1310 915 1350 910 1410 895 1465 905 1478 933 1482V1512M1050 1275L1025 1295 1015 1318M1025 1295L1055 1310 1053 1320"/>
              <path transform="translate(1740 480) scale(.38265 .42092)" d="M265 612L270 550 283 510 300 475 335 455 360 462 375 440 390 440 395 450 408 442M335 455L352 470 356 512M390 450L400 500 402 540 412 562 388 588M115 795H130L125 830M165 782L200 792M202 712L215 702 230 685M200 712L220 720 235 738M235 738L225 750 232 775M225 745L260 748 285 740 280 725 270 715 290 708 285 677M290 708L320 715 345 725 355 700 352 670 330 668M345 725L320 728 285 740 300 755 320 750 345 735 345 725M300 755L325 765 345 800M325 765L335 775 385 768 400 750 385 735 350 738M340 775L345 798 380 796M300 765L310 780 330 790M355 700L410 695 415 675 405 655 385 650 380 630 360 622M340 645L375 650 355 675M415 690L440 710 475 720 475 740 455 755M475 780L500 790 530 795M495 800L540 820 515 815 510 835M530 750L525 720 540 705 580 700 590 710 635 705 635 670 700 657 720 670 750 668 780 705 830 720 805 745 795 768 775 765 778 790 740 810 720 790 690 800 650 780 610 765 595 770V800M595 800L625 805 640 820 680 835 690 805M600 800H575M580 835L630 840 635 855 715 840 735 835 740 818 700 810 690 815M630 845L635 895 645 920 640 930M645 897L680 895 700 865 715 855M715 835L735 850 765 885M740 870L735 890 710 910 705 940H685M765 885L780 895 830 915 895 912 905 905M775 890L785 905 835 922 840 955M840 925L865 935M830 720L860 705 905 712 915 698 950 712 1000 722 1045 715 1040 735 1068 745 1010 775 1000 788 955 797 900 785 850 765 845 740 830 720M1045 715L1065 705 1075 680 1110 680 1130 720 1180 738 1165 765 1155 790 1100 810M1120 830L1135 825M905 905L915 950 905 975 915 1010 915 1050M915 955L935 965 960 985 985 1015 975 1030M925 950L950 950 980 960M940 1015L975 1010M450 845L520 838 540 900M450 845L440 880 460 875 530 902M445 900L440 880M500 990V1005L530 992 575 980 590 975 595 945M575 980V995M165 850L170 875 115 905V915L210 970 270 945 245 890 240 842M50 960H80V925H110M133 935L138 1002 90 1003M60 995L90 1003 95 1025M55 1020L80 1018 95 1030 120 1035 120 1075M120 1037L145 1038 145 1030 175 1010 210 1015M210 970V1000L175 1010M190 1030L205 1025 205 1015 280 1020 295 990 290 950 270 945 355 970M365 880V970H355L350 1035 290 1060 285 1020M365 955H440M183 1030V1065M195 1025V1062M160 1040V1065M350 1035L370 1045 420 1035 430 1010 450 1000 465 1005M370 1045L400 1075 300 1080 290 1060 250 1070M430 1030L440 1070 485 1082 535 1050 510 1045 490 1015M485 1082V1120M400 1080H435L430 1100 475 1140M405 1080L410 1100 400 1130 400 1160 430 1175M300 1080L310 1095 295 1135 270 1150M250 1095H290V1110M275 1150H300L305 1160H340V1185L390 1195 395 1165M342 1185V1225H268M342 1225L370 1230 410 1215 440 1220M395 1195L420 1205 430 1180 480 1187M370 1230L395 1260 425 1258 425 1215M395 1260L370 1285 335 1295 328 1260H335V1232M328 1260V1310L300 1305M425 1262L418 1300 408 1290M380 1320L392 1310 400 1318 388 1326ZM995 1098L1025 1095 1035 1080 1055 1078M1227 1125V1170M118 668L130 672M1100 1175L1112 1165"/>
            </g>
            </g>
          </svg>
          <a class="credit" href="#osm">© OpenStreetMap contributors</a>
        </div>
      </section>
    </div>
  </main>

  <nav class="sheets" aria-label="工作表">
    <button class="sheet source-tab"><svg width="18" height="24" viewBox="0 0 18 24" fill="none" stroke="#666" stroke-width="2"><ellipse cx="9" cy="6" rx="7.500" ry="4.500"/><path d="M1.500 6V18C1.500 24 16.500 24 16.500 18V6"/></svg>数据源</button>
    <button class="sheet current">各国家销售额地图</button>
    <button class="sheet add" aria-label="新建工作表"><svg viewBox="0 0 30 30"><path d="M17 22H2V2H23V14" fill="none" stroke="#666" stroke-width="2"/><path d="M7 17V14M12 17V8M17 17V11" stroke="#666" stroke-width="2"/><path d="M22 16V30M15 23H29" stroke="#666" stroke-width="4"/></svg></button>
    <button class="sheet add" aria-label="新建仪表板"><svg viewBox="0 0 30 30"><path d="M14 22H2V2H23V12H2M12 2V22" fill="none" stroke="#666" stroke-width="2"/><path d="M22 16V30M15 23H29" stroke="#666" stroke-width="4"/></svg></button>
    <button class="sheet add" aria-label="新建故事"><svg viewBox="0 0 30 30"><path d="M12 23L2 20V2L12 6L22 2V13M12 6V23" fill="none" stroke="#666" stroke-width="2"/><path d="M22 16V30M15 23H29" stroke="#666" stroke-width="4"/></svg></button>
  </nav>
  <footer class="status">
    <span>0 个标记</span><span class="size">1 行 x 1 列</span>
    <span class="cell c1"></span><span class="cell c2"></span><span class="cell c2"></span><span class="cell c3"></span>
    <span class="cell pager">
      <button class="tool" aria-label="第一个"><svg width="14" height="14" viewBox="0 0 14 14"><path d="M0 0H2V14H0ZM13 0V14L5 7Z" fill="#bbb"/></svg></button>
      <button class="tool" aria-label="上一个"><svg width="14" height="14" viewBox="0 0 14 14"><path d="M11 0V14L3 7Z" fill="#bbb"/></svg></button>
      <button class="tool" aria-label="下一个"><svg width="14" height="14" viewBox="0 0 14 14"><path d="M3 0V14L11 7Z" fill="#bbb"/></svg></button>
      <button class="tool" aria-label="最后一个"><svg width="14" height="14" viewBox="0 0 14 14"><path d="M14 0H12V14H14ZM1 0V14L9 7Z" fill="#bbb"/></svg></button>
    </span>
    <span class="cell modes">
      <button class="tool" aria-label="工作表排序程序"><svg width="23" height="22" viewBox="0 0 23 22"><path d="M0 3H23M0 11H23M0 19H23" stroke="#bbb" stroke-width="6" stroke-dasharray="7 1"/></svg></button>
      <button class="tool" aria-label="缩略图"><svg width="23" height="22" viewBox="0 0 23 22"><path d="M0 0H23V14H0Z" fill="#bbb"/><path d="M0 19H23" stroke="#bbb" stroke-width="6" stroke-dasharray="7 1"/></svg></button>
      <button class="tool" aria-label="标签页"><svg width="22" height="22"><path d="M0 0H22V22H0Z" fill="#636363"/></svg></button>
    </span>
  </footer>

  <svg class="arrow" width="1160" height="680" viewBox="0 0 1160 680" aria-hidden="true"><rect x="30" y="384" width="303" height="51" rx="1" fill="none" stroke="#e8412a" stroke-width="6"/><path d="M336 413L1060 618 1124 637 1126 628 1144 652 1116 661 1120 653 1060 635 336 416Z" fill="#e8412a"/></svg>
  <p class="note note-one">第一种方法：双击字段</p>
  <p class="note note-two">第二种方法：拖曳字段到此处</p>
  <p class="mark-by"><span>知乎</span> @曾机智</p>
</div>
</body>
</html>
```

FILE: styles.css
```css
* { box-sizing: border-box; }
body { margin: 0; background: #fff; color: #000; font: 24px/32px Inter, "Noto Sans CJK SC", sans-serif; }
h1, h2, p, ul { margin: 0; padding: 0; font-size: 24px; font-weight: 500; }
ul { list-style: none; }
button { padding: 0; border: 0; background: none; color: inherit; font: inherit; }
svg { display: block; flex: none; }
.defs { position: absolute; }

.app { position: relative; display: flex; flex-direction: column; height: 100vh; border-radius: 20px; overflow: hidden; background: #f4f4f4; }

.titlebar { display: flex; align-items: center; height: 58px; flex: none; border-bottom: 2px solid #d2d2d2; }
.lights { display: flex; gap: 16px; padding-left: 16px; width: 200px; }
.light { width: 24px; height: 24px; border-radius: 50%; border: 1px solid rgba(0, 0, 0, .12); }
.light-close { background: #ed6a5f; }
.light-min { background: #f5bf4f; }
.light-max { background: #61c554; }
.window-title { flex: 1; display: flex; align-items: center; justify-content: center; gap: 8px; padding-right: 204px; color: #444; font-size: 26px; font-weight: 700; }

.toolbar { display: flex; align-items: center; height: 78px; flex: none; padding-bottom: 2px; }
.group { display: grid; align-items: center; height: 70px; border-right: 2px solid #d2d2d2; }
.tool { display: flex; align-items: center; justify-content: center; }
.ink, .dark { color: #5f5f5f; }
.pale { color: #b0b0b0; }
.g-home { grid-template-columns: 94px; }
.g-nav { grid-template-columns: 64px 64px 64px; padding: 0 14px 0 12px; }
.g-data { grid-template-columns: 60px 58px 24px 54px 28px; padding: 0 11px 0 15px; }
.g-sheet { grid-template-columns: 60px 22px 66px 54px 30px; padding: 0 9px; }
.g-sort { grid-template-columns: 64px 66px 62px; padding: 0 15px 0 11px; }
.g-mark { grid-template-columns: 44px 24px 62px 12px 80px 46px 220px; padding: 0 4px 0 22px; }
.g-show { grid-template-columns: 48px 22px 68px; padding: 0 12px 0 20px; }
.g-share { grid-template-columns: 60px; padding-left: 14px; border-right: 0; }
.fit { position: relative; justify-self: center; height: 46px; }
.fit-select { appearance: none; width: 168px; height: 46px; border: 2px solid #d2d2d2; border-radius: 3px; background: #f4f4f4; }
.fit-caret { position: absolute; right: 12px; top: 19px; color: #d2d2d2; }
.showme { display: flex; align-items: center; gap: 10px; margin-left: auto; padding-right: 56px; font-weight: 500; }

.workspace { display: flex; gap: 12px; flex: 1; min-height: 0; padding-right: 12px; }

.side { display: flex; flex-direction: column; width: 420px; flex: none; border-right: 2px solid #d2d2d2; border-top: 2px solid #d2d2d2; background: #fff; }
.side-tabs { display: flex; height: 56px; flex: none; }
.side-tab { display: flex; align-items: center; font-weight: 500; text-align: left; }
.side-tab.active { width: 202px; padding: 0 0 2px 36px; }
.side-tab:not(.active) { flex: 1; justify-content: space-between; padding: 0 16px 0 24px; border: solid #d2d2d2; border-width: 0 0 2px 2px; background: #fafafa; }
.source { display: flex; align-items: center; gap: 11px; height: 60px; flex: none; padding-left: 45px; border-bottom: 2px solid #e0e0e0; color: #333; white-space: nowrap; }
.dims { flex: 1; min-height: 0; overflow: hidden; }
.measures { flex: none; height: 431px; border-top: 2px solid #dedede; overflow: hidden; }
.side-head { display: flex; align-items: center; height: 54px; padding-left: 36px; }
.measures .side-head { height: 51px; }
.side-head h2 { flex: 1; }
.side-head .find { margin: 0 10px 0 15px; }
.side-head .menu { height: 36px; padding: 0 13px 0 17px; border-left: 2px solid #d8d8d8; }
.fields { color: #000; font-weight: 500; }
.fields li { display: flex; align-items: center; height: 42px; padding-left: 47px; font-size: 24px; white-space: nowrap; }
.fields svg { width: 22px; height: 22px; margin-right: 25px; overflow: visible; color: #3a7a93; }
.fields .abc { width: 51px; margin-left: -4px; color: #3a7a93; font: 18px/24px "Liberation Sans", sans-serif; }
.fields.green svg { color: #4aa183; }
.fields .gen { font-style: italic; }
.gen .abc { font-style: normal; }

.cards { display: flex; flex-direction: column; gap: 12px; width: 308px; flex: none; }
.card { padding: 14px 12px; border: 2px solid #d2d2d2; background: #fafafa; color: #333; }
.card h2 { font-weight: 400; }
.pages { height: 124px; }
.filters { height: 156px; }
.marks { height: 412px; }
.mark-type { position: relative; margin-top: 24px; }
.mark-select { appearance: none; display: block; width: 100%; height: 42px; padding: 0 0 0 58px; border: 2px solid #ccc; border-radius: 3px; background: #fafafa; color: #333; font: 20px/32px Inter, "Noto Sans CJK SC", sans-serif; }
.mark-dot { position: absolute; left: 25px; top: 10px; }
.mark-arrow { position: absolute; right: 2px; top: 2px; display: grid; place-items: center; width: 35px; height: 38px; border-left: 2px solid #e0e0e0; color: #555; }
.mark-grid { display: grid; grid-template-columns: repeat(3, 86px); justify-content: space-between; gap: 12px 0; margin-top: 12px; }
.mark { display: flex; flex-direction: column; align-items: center; justify-content: flex-end; gap: 10px; height: 84px; border: 2px solid #d2d2d2; color: #000; font-size: 18px; line-height: 28px; font-weight: 500; white-space: nowrap; }
.mark svg { width: 32px; height: 32px; }

.canvas { display: flex; flex-direction: column; gap: 12px; flex: 1; min-width: 0; padding-bottom: 12px; }
.shelf { display: flex; align-items: center; height: 56px; flex: none; border: 2px solid #d2d2d2; background: #fafafa; color: #333; }
.shelf-name { display: flex; align-items: center; gap: 13px; width: 249px; height: 52px; padding-left: 12px; border-right: 2px solid #d2d2d2; }
.pill { width: 296px; height: 40px; margin-left: 5px; padding-left: 21px; border-radius: 20px; background: #4cb07f; color: #fff; text-align: left; }
.view { display: flex; flex-direction: column; flex: 1; min-height: 0; padding: 0 12px 12px 10px; border: 2px solid #d2d2d2; background: #fff; }
.view-title { padding: 26px 10px 14px; color: #333; font-size: 40px; line-height: 48px; font-weight: 400; }
.map { position: relative; display: grid; place-items: center; flex: 1; min-height: 0; border: 2px solid #ebebeb; }
.world { width: 1050px; height: 1070px; }
.borders { fill: none; stroke: #a6a6a6; stroke-width: 1px; }
.borders path { vector-effect: non-scaling-stroke; }
.credit { position: absolute; left: 10px; bottom: 3px; color: #444; font: 16px/22px "Liberation Sans", sans-serif; text-decoration: none; }

.sheets { display: flex; height: 60px; flex: none; border: solid #ccc; border-width: 2px 0; background: #e5e5e5; }
.sheet { display: flex; align-items: center; padding-top: 2px; border-right: 2px solid #ccc; color: #555; }
.source-tab { gap: 10px; width: 261px; padding-left: 19px; }
.current { padding: 2px 14px 0 13px; background: #fafafa; color: #444; }
.add { justify-content: center; width: 64px; }
.add svg { width: 30px; height: 30px; }

.status { display: flex; align-items: center; height: 42px; flex: none; padding-left: 24px; background: #eaeaea; font-size: 20px; }
.size { margin-left: 32px; }
.cell { display: flex; align-items: center; height: 42px; border-left: 2px solid #ccc; }
.c1 { width: 254px; margin-left: auto; }
.c2 { width: 54px; }
.c3 { width: 94px; }
.pager { width: 142px; gap: 18px; padding-left: 15px; }
.modes { width: 154px; gap: 19px; padding-left: 16px; }

.arrow { position: absolute; left: 0; top: 0; }
.note { position: absolute; color: #e8412a; font: 500 37px/64px "Noto Sans CJK SC", sans-serif; white-space: nowrap; }
.note-one { left: 269px; top: 305px; }
.note-two { left: 1214px; top: 645px; }
.mark-by { position: absolute; right: 76px; top: 1474px; color: #fff; font: 500 82px/116px "Noto Sans CJK SC", sans-serif; text-shadow: 6px 6px 0 rgba(0, 0, 0, .3); white-space: nowrap; }
.mark-by span { margin-right: 8px; font-size: 88px; }
```
